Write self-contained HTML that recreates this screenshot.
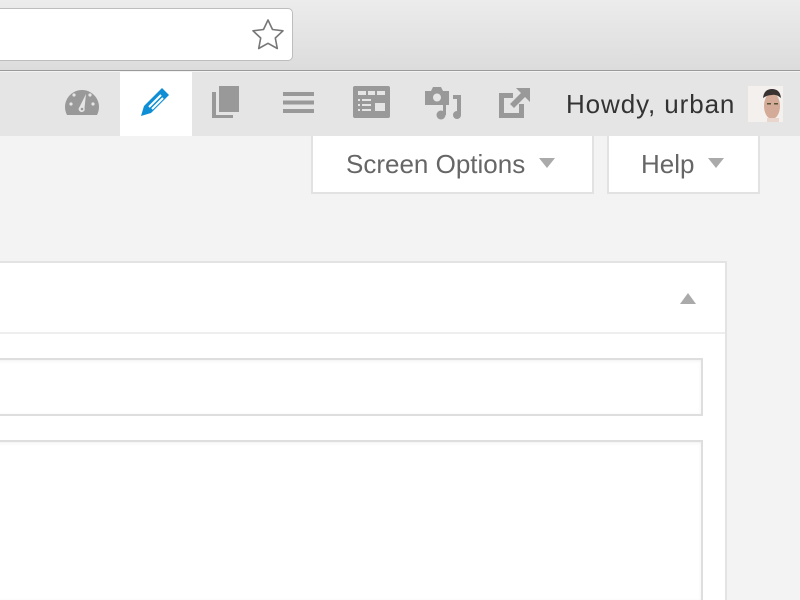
<!DOCTYPE html>
<html style="width:800px;height:600px;overflow:hidden"><head><style>
*{margin:0;padding:0;box-sizing:border-box}
body{width:800px;height:600px;overflow:hidden;background:#f3f3f3;font-family:"Liberation Sans",sans-serif;position:relative}
.chrome{position:absolute;left:0;top:0;width:800px;height:71px;background:linear-gradient(#ececec,#dcdcdc);border-bottom:1px solid #9a9a9a}
.url{position:absolute;left:-10px;top:8px;width:303px;height:53px;background:#fff;border:1px solid #bdbdbd;border-radius:5px}
.bar{position:absolute;left:0;top:72px;width:800px;height:64px;background:#e5e5e5}
.act{position:absolute;left:120px;top:72px;width:72px;height:64px;background:#fff}
.ic{position:absolute}
.howdy{position:absolute;left:566px;top:89px;font-size:26px;color:#333;letter-spacing:0.9px}
.av{position:absolute;left:748px;top:86px;width:35px;height:36px;background:#f4f0ee;overflow:hidden}
.btn{position:absolute;top:136px;height:58px;background:#fff;border:2px solid #e2e2e2;border-top:none;color:#666;font-size:26px;line-height:56px}
.tri{display:inline-block;width:0;height:0;border-left:8px solid transparent;border-right:8px solid transparent;border-top:10px solid #aaa;vertical-align:middle;margin-left:14px;position:relative;top:-3px}
.wrap{position:absolute;left:0;top:0;width:800px;height:600px;overflow:hidden}
.panel{position:absolute;left:-5px;top:261px;width:732px;height:339px;background:#fff;border:2px solid #e3e3e3;border-bottom:none}
.sep{position:absolute;left:0;top:69px;width:100%;height:2px;background:#eee}
.in{position:absolute;left:-5px;width:708px;background:#fff;border:2px solid #dedede;box-shadow:inset 0 1px 3px rgba(0,0,0,.06)}
</style></head><body>
<div class="wrap">
<div class="chrome"><div class="url"></div>
<svg class="ic" style="left:249px;top:17px" width="38" height="36" viewBox="0 0 38 36"><path d="M19 3 L23.5 12.5 L34 13.8 L26.3 21 L28.3 31.5 L19 26.3 L9.7 31.5 L11.7 21 L4 13.8 L14.5 12.5 Z" fill="none" stroke="#777" stroke-width="1.6" stroke-linejoin="round"/></svg>
</div>
<div class="bar"></div><div class="act"></div>
<svg class="ic" style="left:64px;top:86px" width="36" height="30" viewBox="0 0 36 30"><path d="M3 29 A17 17 0 1 1 33 29 Z" fill="#999"/><circle cx="7" cy="18" r="1.6" fill="#e5e5e5"/><circle cx="10" cy="9" r="1.6" fill="#e5e5e5"/><circle cx="26" cy="9" r="1.6" fill="#e5e5e5"/><circle cx="29" cy="18" r="1.6" fill="#e5e5e5"/><path d="M22 8 L20.5 22 A3 3 0 1 1 15.5 21 Z" fill="#e5e5e5"/><circle cx="18" cy="23" r="1.3" fill="#999"/></svg>
<svg class="ic" style="left:139px;top:86px" width="32" height="32" viewBox="0 0 32 32"><path d="M23 2 L30 9 L12 27 L2 30 L5 20 Z" fill="#0e8ed4"/><path d="M10 21 L22 9 M13 23 L24 12" stroke="#fff" stroke-width="2"/></svg>
<svg class="ic" style="left:211px;top:86px" width="30" height="32" viewBox="0 0 30 32"><rect x="8" y="0" width="20" height="26" fill="#999"/><path d="M1 6 H5 V29 H22 V32 H1 Z" fill="#999"/></svg>
<svg class="ic" style="left:283px;top:92px" width="31" height="22" viewBox="0 0 31 22"><rect y="0" width="31" height="4" fill="#999"/><rect y="8.5" width="31" height="4" fill="#999"/><rect y="17" width="31" height="4" fill="#999"/></svg>
<svg class="ic" style="left:353px;top:86px" width="37" height="32" viewBox="0 0 37 32"><rect width="37" height="32" rx="2" fill="#999"/><rect x="5" y="5" width="8" height="4" fill="#e5e5e5"/><rect x="15" y="5" width="7" height="4" fill="#e5e5e5"/><rect x="24" y="5" width="8" height="4" fill="#e5e5e5"/><rect x="5" y="13" width="2" height="2" fill="#e5e5e5"/><rect x="9" y="13" width="9" height="2" fill="#e5e5e5"/><rect x="5" y="18" width="2" height="2" fill="#e5e5e5"/><rect x="9" y="18" width="9" height="2" fill="#e5e5e5"/><rect x="5" y="23" width="2" height="2" fill="#e5e5e5"/><rect x="9" y="23" width="9" height="2" fill="#e5e5e5"/><rect x="22" y="17" width="10" height="8" fill="#e5e5e5"/></svg>
<svg class="ic" style="left:423px;top:85px" width="40" height="36" viewBox="0 0 40 36"><path d="M2 6 H8 L10 2 H18 L20 6 H26 V20 H2 Z" fill="#999"/><circle cx="14" cy="12.5" r="4" fill="#e5e5e5"/><path d="M30 10 H38 V30 A4 4 0 1 1 34 26 V14 H30 Z" fill="#999"/><circle cx="18" cy="30" r="4.5" fill="#999"/><rect x="20" y="18" width="3" height="12" fill="#999"/></svg>
<svg class="ic" style="left:499px;top:88px" width="32" height="30" viewBox="0 0 32 30"><path d="M0 5 H14 V10 H5 V25 H20 V16 H25 V30 H0 Z" fill="#999"/><path d="M17 0 H31 V14 L26 9 L15 20 L11 16 L22 5 Z" fill="#999"/></svg>
<div class="howdy">Howdy, urban</div>
<div class="av"><svg width="35" height="36" viewBox="0 0 35 36"><ellipse cx="24" cy="20" rx="8" ry="13" fill="#d4ab98"/><path d="M15 12 Q16 3 24 3 Q32 3 33 12 Q28 8 24 9 Q19 9 15 12 Z" fill="#3a3230"/><rect x="19" y="17" width="4" height="1.5" fill="#553"/><rect x="26" y="17" width="4" height="1.5" fill="#553"/><rect x="19" y="32" width="12" height="4" fill="#e9d5cc"/></svg></div>
<div class="btn" style="left:311px;width:283px;padding-left:33px">Screen Options<span class="tri"></span></div>
<div class="btn" style="left:607px;width:153px;padding-left:32px">Help<span class="tri"></span></div>
<div class="panel"><div class="sep"></div>
<div style="position:absolute;left:683px;top:30px;width:0;height:0;border-left:8px solid transparent;border-right:8px solid transparent;border-bottom:11px solid #aaa"></div>
</div>
<div class="in" style="top:358px;height:58px"></div>
<div class="in" style="top:440px;height:160px;border-bottom:none"></div>
</div>
</body></html>
